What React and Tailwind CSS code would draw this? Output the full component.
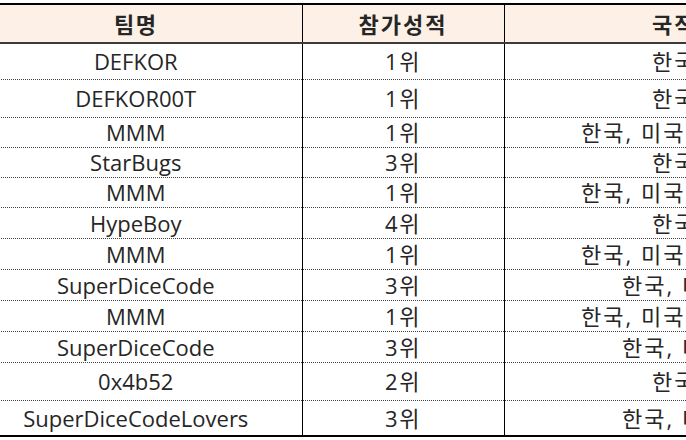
import React from 'react';

const rows = [
  { team: 'DEFKOR', rank: '1위', country: '한국', h: 'h-[36px]' },
  { team: 'DEFKOR00T', rank: '1위', country: '한국', h: 'h-[38px]' },
  { team: 'MMM', rank: '1위', country: '한국, 미국, 캐나다', h: 'h-[30px]' },
  { team: 'StarBugs', rank: '3위', country: '한국', h: 'h-[30px]' },
  { team: 'MMM', rank: '1위', country: '한국, 미국, 캐나다', h: 'h-[30px]' },
  { team: 'HypeBoy', rank: '4위', country: '한국', h: 'h-[31px]' },
  { team: 'MMM', rank: '1위', country: '한국, 미국, 캐나다', h: 'h-[31px]' },
  { team: 'SuperDiceCode', rank: '3위', country: '한국, 미국', h: 'h-[31px]' },
  { team: 'MMM', rank: '1위', country: '한국, 미국, 캐나다', h: 'h-[31px]' },
  { team: 'SuperDiceCode', rank: '3위', country: '한국, 미국', h: 'h-[31px]' },
  { team: '0x4b52', rank: '2위', country: '한국', h: 'h-[38px]' },
  { team: 'SuperDiceCodeLovers', rank: '3위', country: '한국, 미국', h: 'h-[36px]' },
];

function App() {
  return (
    <main className="w-[686px] h-[440px] overflow-hidden bg-white pt-[3px]">
      <table
        className="-ml-[30px] w-[874px] max-w-none table-fixed border-collapse text-[22px] text-[#262626]"
        style={{ fontFamily: '"Open Sans", "Noto Sans CJK KR", sans-serif' }}
      >
        <colgroup>
          <col className="w-[332px]" />
          <col className="w-[202px]" />
          <col className="w-[340px]" />
        </colgroup>
        <thead>
          <tr className="h-[39px] bg-[#fdf1e7] border-t-2 border-t-black border-b-2 border-b-[#3b3b3b]">
            <th className="font-bold text-center p-0 leading-none tracking-[1.5px]">팀명</th>
            <th className="font-bold text-center p-0 leading-none tracking-[2px] border-l border-l-black">참가성적</th>
            <th className="font-bold text-center p-0 leading-none tracking-[2px] border-l border-l-black">국적</th>
          </tr>
        </thead>
        <tbody>
          {rows.map((r, i) => (
            <tr
              key={i}
              className={`${r.h} ${
                i === rows.length - 1
                  ? 'border-b-2 border-b-black'
                  : 'border-b border-dotted border-b-[#444]'
              }`}
            >
              <td className="text-center p-0 leading-none whitespace-nowrap">{r.team}</td>
              <td className="text-center p-0 leading-none tracking-[1.5px] border-l border-l-black border-solid">{r.rank}</td>
              <td className="text-center p-0 leading-none tracking-[2px] border-l border-l-black border-solid whitespace-nowrap">{r.country}</td>
            </tr>
          ))}
        </tbody>
      </table>
    </main>
  );
}

export default App;
